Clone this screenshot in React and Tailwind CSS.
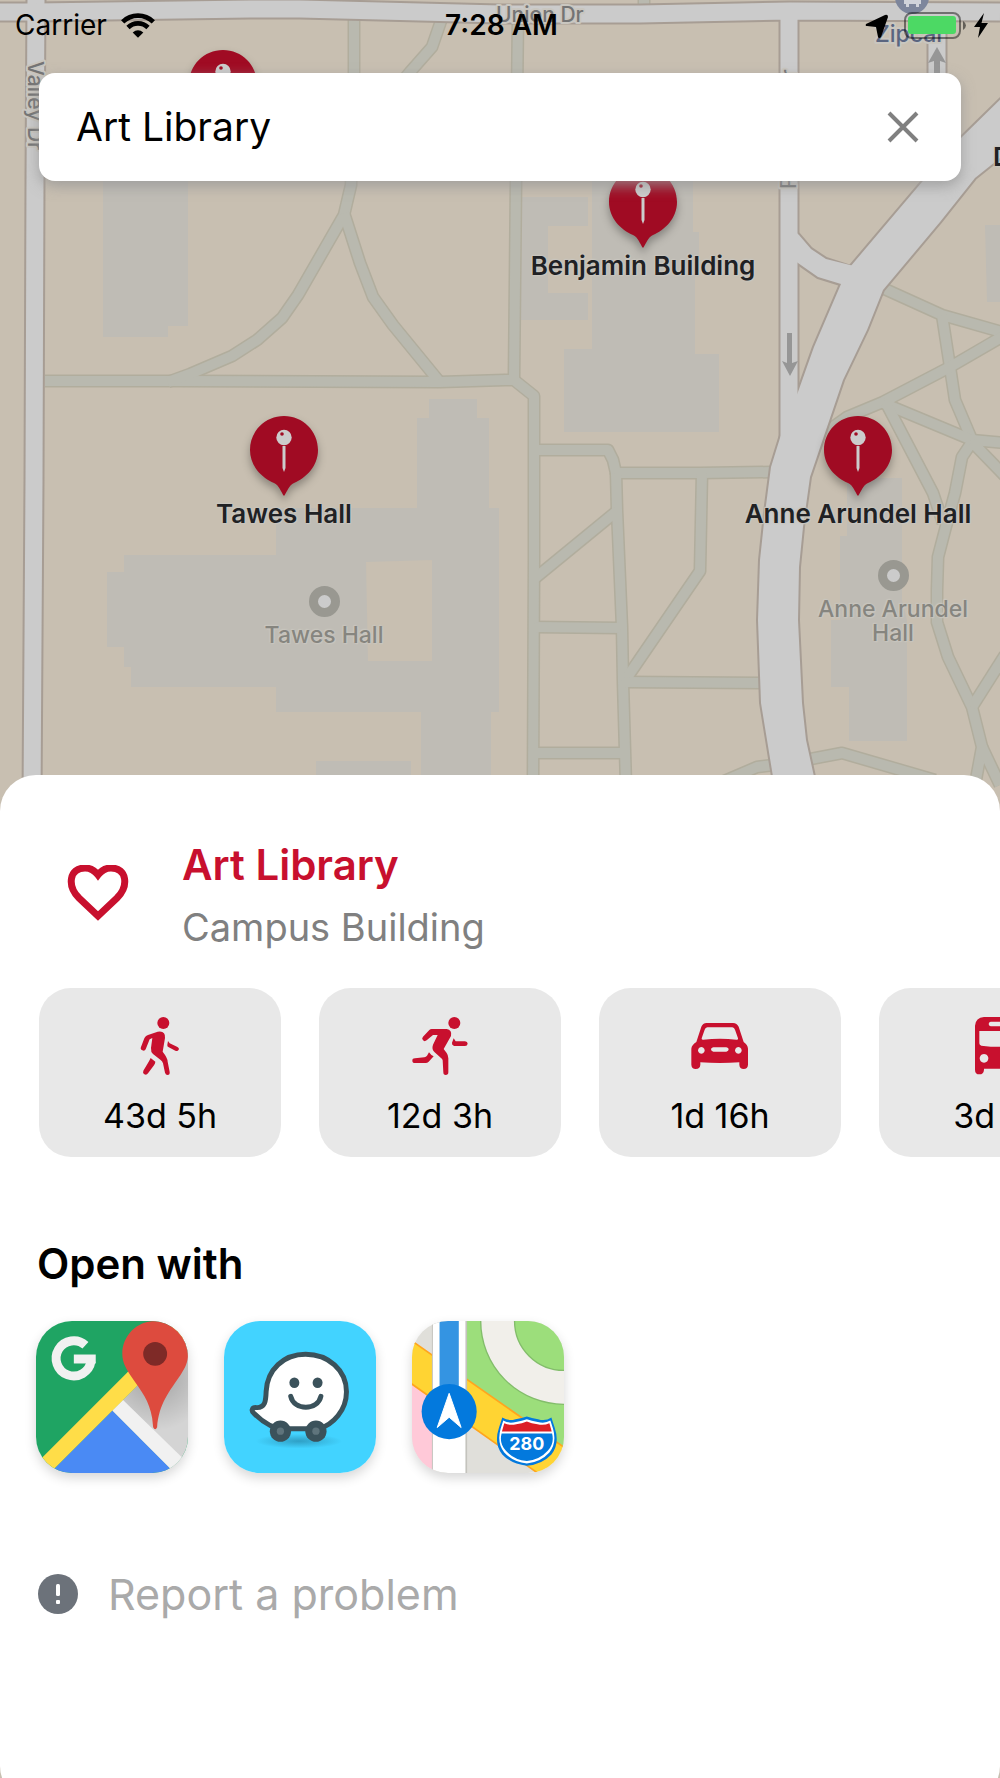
import React from "react";

const FOOTPATHS = [
  "M45 381H180L440 382L505 380H514L534 396V560L533 790",
  "M354 15V90L351 185L344 215L298 295L282 318L257 340L232 356L190 374L168 382",
  "M344 213L360 263L373 297L393 325L438 380",
  "M442 18L432 47L410 72L375 115L354 170",
  "M518 15L516 180L514 380",
  "M644 0V10",
  "M536 450H608L613 460L616 473H700L772 472",
  "M616 473L617 510L622 627L623 682L626 785",
  "M534 579L617 511",
  "M702 473L700 571L624 682",
  "M534 627L621 628",
  "M624 682L762 683",
  "M533 753H625",
  "M715 785L757 767L790 763L842 753L935 780",
  "M878 286L942 315L1005 333",
  "M942 315L950 367L955 400L972 440",
  "M1005 335L950 367L883 402L847 417L826 432",
  "M883 403L972 440L1005 443",
  "M886 403L933 493L943 523",
  "M972 442L962 457L955 493L945 530L938 557L937 590V622L948 657L972 707L982 747L975 785",
  "M972 707L1005 655",
  "M982 747L1000 785",
  "M972 442L1005 476",
];

const ROADS = [
  "M36 0L35 180L34 480L32 800",
  "M0 12L36 12L250 9H300L500 14L640 14L790 11L1000 12",
  "M789 12V440",
  "M937 12V170",
];

const MAIN_ROAD =
  "M1010 90L962 137L922 182L850 267L841 284L814 347L798 392L780 438L771 467L765 513L760 560L758 620L761 703L776 795H818L806 740L802 703L798 620L799 567L803 527L810 477L843 380L867 330L883 290L940 222L975 178L1010 150Z";

const LABEL = "font-medium [paint-order:stroke] stroke-[#c9c6bf]";

function MapGround() {
  return (
    <svg
      aria-hidden="true"
      viewBox="0 0 1000 1778"
      preserveAspectRatio="xMidYMin slice"
      className="absolute inset-0 h-full w-full"
    >
      <rect width="1000" height="1778" fill="#c8bfb1" />
      <g fill="#bfbcb5">
        <path d="M103 150H188V326H168V337H103Z" />
        <path d="M513 197H588V226H548V293H588V320H513Z" />
        <path d="M592 150H693V232H699V277H695V354H719V432H564V349H592Z" />
        <path d="M429 399H477V418H489V508H499V712H491V790H421V712H276V687H131V667H124V647H107V572H124V555H276V508H417V418H429Z" />
        <path d="M316 761H411V790H316Z" />
        <path d="M847 478H902V600L907 620V741H849V687H831V620H840V536H847Z" />
        <path d="M985 225H1000V302H987Z" />
      </g>
      <path d="M366 562L432 560V661H368Z" fill="#c8bfb1" />

      <g fill="none" strokeLinejoin="round">
        <g stroke="#b1ad9d" strokeWidth="13">
          {FOOTPATHS.map((d) => <path key={d} d={d} />)}
        </g>
        <g stroke="#b9b9af" strokeWidth="10">
          {FOOTPATHS.map((d) => <path key={d} d={d} />)}
        </g>
        <g stroke="#a79d94" strokeWidth="21">
          {ROADS.map((d) => <path key={d} d={d} />)}
        </g>
        <path d={MAIN_ROAD} stroke="#a79d94" strokeWidth="4" />
        <path
          d="M790 227L799 235L811 249L826 259L860 270L850 287L818 277L798 263L790 256Z"
          stroke="#a79d94"
          strokeWidth="4"
        />
      </g>
      <path d={MAIN_ROAD} fill="#cbcbcb" />
      <path d="M790 227L799 235L811 249L826 259L862 268L850 287L841 284L818 277L798 263L790 256Z" fill="#cbcbcb" />
      <g fill="none" stroke="#cbcbcb" strokeWidth="17">
        {ROADS.map((d) => <path key={d} d={d} />)}
      </g>

      <g fill="#969696">
        <path d="M787 333h5v30l6-2l-8 15l-8-15l5 2z" />
        <path d="M934 90V61l-6 2l9-16l9 16l-6-2v29z" />
      </g>
      <circle cx="912" cy="-3" r="17" fill="#7d869c" />
      <path d="M904 -6h17v10h-2v3h-3v-3h-7v3h-3v-3h-2z" fill="#d0d3da" />

      <g fontFamily="Inter, sans-serif" fontSize="21" fill="#747474" strokeWidth="4" strokeLinejoin="round">
        <text x="496" y="22" className={LABEL}>Union Dr</text>
        <text x="875" y="42" fontSize="23" fill="#5a6580" className={LABEL}>Zipcar</text>
        <text transform="translate(28 61) rotate(90)" className={LABEL}>Valley Dr</text>
        <text transform="translate(796 189) rotate(-90)" className={LABEL}>Preinkert Dr</text>
      </g>
    </svg>
  );
}

const HALO =
  "[text-shadow:0_0_2px_#c9c6bf,0_0_3px_#c9c6bf,1px_1px_1px_#c9c6bf,-1px_-1px_1px_#c9c6bf]";

function Pin({ place, name }) {
  return (
    <button
      type="button"
      className={`absolute flex w-[260px] -translate-x-1/2 flex-col items-center gap-[2px] ${place}`}
    >
      <svg viewBox="0 0 68 80" className="h-[80px] w-[68px] drop-shadow-[0_5px_4px_rgba(0,0,0,0.3)]">
        <path
          d="M34 0C15 0 0 15 0 34C0 50 12 62 24 67C29 69 31 76 34 80C37 76 39 69 44 67C56 62 68 50 68 34C68 15 53 0 34 0Z"
          fill="#a00b23"
        />
        <circle cx="34" cy="21.500" r="7.700" fill="#ccc" />
        <circle cx="32" cy="18" r="1.800" fill="#a00b23" />
        <path d="M32.500 30h3v22l-1.500 4l-1.500-4z" fill="#ccc" />
      </svg>
      <span className={`text-[26px] leading-[32px] font-semibold whitespace-nowrap text-[#202124] ${HALO}`}>
        {name}
      </span>
    </button>
  );
}

function Landmark({ place, name }) {
  return (
    <div className={`absolute flex w-[180px] -translate-x-1/2 flex-col items-center gap-[6px] ${place}`}>
      <span className="size-[31px] rounded-full border-[9px] border-[#999891] bg-[#cbcbcb]" />
      <span className={`text-center text-[23px] leading-[24px] font-medium text-[#86857f] ${HALO}`}>{name}</span>
    </div>
  );
}

function StatusBar() {
  return (
    <header className="relative grid h-[50px] grid-cols-3 items-center pr-3 pl-[15px] text-[28px] leading-[32px] text-black">
      <div className="flex items-center gap-[14px]">
        <span>Carrier</span>
        <svg viewBox="0 0 102 74" className="h-[25px] w-[34px]" aria-label="Wi-Fi">
          <g fill="none" stroke="#000" strokeWidth="14">
            <path d="M5 26A66 66 0 0 1 97 26" />
            <path d="M21 43A43 43 0 0 1 81 43" />
          </g>
          <path d="M51 74L35 58Q51 44 67 58Z" />
        </svg>
      </div>
      <span className="text-center font-semibold">7:28 AM</span>
      <svg viewBox="0 0 124 28" className="h-[28px] w-[124px] justify-self-end" aria-label="Location, battery charging">
        <path d="M2 13Q1 15 3 15L12 16L14 26Q15 28 17 26L24 6Q24 3 21 4Z" />
        <rect x="41" y="2" width="55" height="25" rx="7" fill="none" stroke="#000" strokeOpacity=".45" strokeWidth="2" />
        <rect x="44" y="5" width="48" height="18" rx="3" fill="#4cd964" />
        <path d="M99 10Q102 12 102 14.500T99 19Z" fillOpacity=".5" />
        <path d="M120 2L110 16H116L114 27L124 12H117.500Z" />
      </svg>
    </header>
  );
}

function WalkIcon() {
  return (
    <g>
      <circle cx="100" cy="21" r="18" />
      <path d="M46 62Q49 59 54 57L83 47Q107 43 105 66L98 107Q113 126 113 137L119 168Q120 177 113 177Q107 177 105 170L99 142Q97 135 91 131L69 114Q62 108 63 96L67 66L59 70L47 100Q44 106 37 103Q30 100 33 93L43 67Z" />
      <path d="M114 75L119 82L141 92Q149 96 146 101Q143 107 136 104L115 93Q111 91 112 86Z" />
      <path d="M62 126L76 137Q76 142 72 148L54 172Q50 178 43 175Q37 171 40 164L57 136Z" />
    </g>
  );
}

function RunIcon() {
  return (
    <g>
      <circle cx="133" cy="21" r="18" />
      <path d="M65 39H110Q127 42 123 60L101 99L110 111Q115 118 115 127V169Q115 177 107 177Q100 177 100 169L98 133Q97 129 93 126L74 109Q64 100 69 86L83 57H69L50 73Q44 78 39 73Q34 67 39 62L58 42Q61 39 65 39Z" />
      <path d="M131 67L137 76H165Q173 77 173 83Q172 90 165 90H132Q124 86 126 80Z" />
      <path d="M57 109Q63 118 71 121L56 137Q52 141 47 141H15Q7 141 7 134Q7 127 15 127L43 124Q48 123 51 119Z" />
    </g>
  );
}

function CarIcon() {
  return (
    <path
      fillRule="evenodd"
      d="M50 21H129Q141 22 146 32L161 78Q173 86 174 98V146Q173 159 161 159Q149 159 148 146V139Q90 143 31 139V146Q30 159 17 159Q5 159 4 146V98Q5 87 19 78L34 32Q38 22 50 21ZM52 34Q46 35 44 41L35 67Q34 72 40 71Q90 65 139 71Q146 72 144 67L135 41Q133 35 127 34ZM34 93a10 10 0 1 0 .1 0ZM145 93a10 10 0 1 0 .1 0ZM70 94Q63 95 63 100Q63 106 70 107H109Q116 106 116 100Q116 95 109 94Z"
    />
  );
}

function BusIcon() {
  return (
    <path
      fillRule="evenodd"
      d="M42 3H138Q163 5 165 29V161Q165 175 152 175Q139 175 138 161V158H42V161Q41 175 28 175Q15 175 15 161V29Q17 5 42 3ZM62 17Q56 18 56 24Q56 29 62 31H118Q124 29 124 24Q124 18 118 17ZM28 45V82Q28 88 34 89Q90 96 146 89Q152 88 152 82V45ZM42 114a13 13 0 1 0 .1 0ZM138 114a13 13 0 1 0 .1 0Z"
    />
  );
}

const TRAVEL = [
  { mode: "Walk", time: "43d 5h", Icon: WalkIcon },
  { mode: "Run", time: "12d 3h", Icon: RunIcon },
  { mode: "Drive", time: "1d 16h", Icon: CarIcon },
  { mode: "Bus", time: "3d 4h", Icon: BusIcon },
];

function GoogleMapsLogo() {
  return (
    <svg viewBox="0 0 458 458" className="size-full">
      <defs>
        <radialGradient id="pinShade" cx="359" cy="160" r="170" gradientUnits="userSpaceOnUse">
          <stop offset="0.4" stopColor="#000" stopOpacity=".15" />
          <stop offset="1" stopColor="#000" stopOpacity="0" />
        </radialGradient>
      </defs>
      <rect width="458" height="458" fill="#1fa463" />
      <path d="M500 0L230 270L458 498V0Z" fill="#d4d4d4" />
      <path d="M262 238L458 434V40Z" fill="url(#pinShade)" />
      <path d="M-5 505L230 270L465 505Z" fill="#4a8af4" />
      <path d="M230 270L262 238L480 450L440 480Z" fill="#f1f1f1" />
      <path d="M-40 470L430 0H500L0 500Z" fill="#ffdd48" />
      <path
        d="M359 0C304 0 260 44 260 99C260 127 273 147 288 169C318 212 341 240 350 292L353 320Q359 333 365 320C370 250 402 212 436 162C450 141 458 124 458 99C458 44 414 0 359 0Z"
        fill="#dd4b3e"
      />
      <circle cx="359" cy="99" r="36" fill="#7e2a27" />
      <path d="M149 73A53 53 0 1 0 166 121" fill="none" stroke="#f1f1f1" strokeWidth="27" />
      <rect x="114" y="101" width="66" height="27" fill="#f1f1f1" />
    </svg>
  );
}

function WazeLogo() {
  return (
    <svg viewBox="0 0 458 458" className="size-full">
      <defs>
        <radialGradient id="wheelShade">
          <stop offset="0" stopColor="#1c6c8c" stopOpacity=".5" />
          <stop offset="1" stopColor="#1c6c8c" stopOpacity="0" />
        </radialGradient>
      </defs>
      <rect width="458" height="458" fill="#42d3ff" />
      <ellipse cx="226" cy="362" rx="130" ry="22" fill="url(#wheelShade)" />
      <path
        d="M246 100C180 100 130 146 127 212C126 242 124 262 98 261C84 260 81 270 90 278C120 308 148 325 180 325H285C330 312 369 268 369 213C369 148 314 100 246 100Z"
        fill="#fff"
        stroke="#3b525b"
        strokeWidth="15"
        strokeLinejoin="round"
      />
      <g fill="#3b525b">
        <circle cx="170" cy="332" r="32" />
        <circle cx="277" cy="332" r="32" />
        <ellipse cx="212" cy="186" rx="15" ry="16" />
        <ellipse cx="282" cy="186" rx="15" ry="16" />
      </g>
      <circle cx="170" cy="332" r="11" fill="#5f747c" />
      <circle cx="277" cy="332" r="11" fill="#5f747c" />
      <path d="M201 227C210 271 283 271 292 227" fill="none" stroke="#3b525b" strokeWidth="15" strokeLinecap="round" />
    </svg>
  );
}

function AppleMapsLogo() {
  return (
    <svg viewBox="0 0 458 458" className="size-full">
      <rect width="458" height="458" fill="#e0dfda" />
      <path d="M0 190L70 240V458H0Z" fill="#ffc9d8" />
      <path d="M162 0H458V385L162 177Z" fill="#9cde7b" />
      <circle cx="458" cy="0" r="200" fill="none" stroke="#83bd6b" strokeWidth="106" />
      <circle cx="458" cy="0" r="200" fill="none" stroke="#f1efea" strokeWidth="98" />
      <path d="M-20 46L480 396V530L-20 176Z" fill="#ffd433" stroke="#ffa51f" strokeWidth="5" />
      <path d="M60 0H166V458H60Z" fill="#c4c3bd" />
      <path d="M63 0H161V458H63Z" fill="#fff" />
      <path d="M83 0H141V240H83Z" fill="#3494e2" />
      <circle cx="112" cy="273" r="83" fill="#0379dd" />
      <path d="M112 218L148 321L112 290L76 321Z" fill="#fff" stroke="#fff" strokeWidth="3" strokeLinejoin="round" />
      <path
        d="M272 291Q290 303 312 296Q332 293 346 288Q360 293 380 296Q402 303 420 291L430 322Q446 370 420 402Q392 432 346 436Q300 432 272 402Q246 370 262 322Z"
        fill="#0379dd"
      />
      <path
        d="M275 300Q292 310 313 304Q332 301 346 296Q360 301 379 304Q400 310 417 300L425 325Q437 368 414 396Q388 425 346 429Q304 425 278 396Q255 368 267 325Z"
        fill="#fff"
      />
      <path d="M278 308Q295 316 314 311Q332 309 346 303Q360 309 378 311Q397 316 414 308L421 333H271Z" fill="#dc1f26" />
      <path d="M270 339H422Q430 368 409 391Q385 418 346 422Q307 418 283 391Q262 368 270 339Z" fill="#0379dd" />
      <text
        x="346"
        y="390"
        textAnchor="middle"
        fontFamily="Inter, sans-serif"
        fontWeight="700"
        fontSize="54"
        fill="#fff"
      >
        280
      </text>
    </svg>
  );
}

const MAP_APPS = [
  { name: "Google Maps", Logo: GoogleMapsLogo },
  { name: "Waze", Logo: WazeLogo },
  { name: "Apple Maps", Logo: AppleMapsLogo },
];

export default function App() {
  return (
    <div className="relative flex min-h-screen flex-col overflow-hidden bg-[#c8bfb1] font-['Inter',sans-serif]">
      <MapGround />
      <Pin place="left-[223px] top-[50px]" name="" />
      <Pin place="left-[643px] top-[168px]" name="Benjamin Building" />
      <Pin place="left-[284px] top-[416px]" name="Tawes Hall" />
      <Pin place="left-[858px] top-[416px]" name="Anne Arundel Hall" />
      <Landmark place="left-[324px] top-[586px]" name="Tawes Hall" />
      <Landmark place="left-[893px] top-[560px]" name="Anne Arundel Hall" />
      <span className={`absolute top-[141px] left-[993px] text-[26px] leading-[32px] font-semibold text-[#202124] ${HALO}`}>
        D
      </span>

      <StatusBar />
      <div className="relative flex-1 px-[39px] pt-[23px]">
        <form
          className="flex h-[108px] items-center rounded-[16px] bg-white pr-[40px] pl-[37px] shadow-[0_5px_14px_rgba(150,150,150,0.8)]"
          onSubmit={(e) => e.preventDefault()}
        >
          <input
            type="text"
            aria-label="Search places"
            defaultValue="Art Library"
            className="min-w-0 flex-1 bg-transparent text-[39px] leading-[48px] text-black outline-none"
          />
          <button type="button" aria-label="Clear search">
            <svg viewBox="0 0 36 36" className="size-[36px]" fill="none" stroke="#808080" strokeWidth="4">
              <path d="M4 4L32 32M32 4L4 32" />
            </svg>
          </button>
        </form>
      </div>

      <main className="relative -mb-6 rounded-[36px] bg-white pt-[59px] pb-[184px]">
        <div className="flex items-center gap-[53px] px-[67px]">
          <button type="button" aria-label="Add to favorites">
            <svg viewBox="0 0 62 62" className="size-[62px]" fill="none" stroke="#c8102e" strokeWidth="7">
              <path d="M31 51L12 33C0 21 2 3 18 3C24 3 28 6 31 10C34 6 38 3 44 3C60 3 62 21 50 33Z" />
            </svg>
          </button>
          <div>
            <h1 className="text-[42px] leading-[62px] font-semibold text-[#c8102e]">Art Library</h1>
            <p className="text-[38px] leading-[62px] text-[#808080]">Campus Building</p>
          </div>
        </div>

        <ul className="mt-[30px] flex gap-[38px] overflow-x-auto px-[39px] [scrollbar-width:none]">
          {TRAVEL.map(({ mode, time, Icon }) => (
            <li key={mode} className="shrink-0">
              <button
                type="button"
                aria-label={`${mode}, ${time}`}
                className="flex w-[242px] flex-col items-center gap-5 rounded-[32px] bg-[#e8e8e8] pt-7 pb-[21px]"
              >
                <svg viewBox="0 0 180 180" className="size-[60px]" fill="#c8102e">
                  <Icon />
                </svg>
                <span className="text-[34px] leading-[40px] text-black">{time}</span>
              </button>
            </li>
          ))}
        </ul>

        <h2 className="mt-[79px] px-[37px] text-[42px] leading-[56px] font-semibold text-black">Open with</h2>
        <div className="mt-[29px] flex gap-[36px] px-[36px]">
          {MAP_APPS.map(({ name, Logo }) => (
            <button
              key={name}
              type="button"
              aria-label={name}
              className="size-[152px] overflow-hidden rounded-[36px] shadow-[0_5px_12px_rgba(0,0,0,0.16)]"
            >
              <Logo />
            </button>
          ))}
        </div>

        <button type="button" className="mt-[97px] ml-[38px] flex items-center gap-[30px]">
          <svg viewBox="0 0 40 40" className="size-[40px]">
            <circle cx="20" cy="20" r="20" fill="#6c727a" />
            <rect x="18" y="10" width="4" height="12" rx="1.500" fill="#fff" />
            <rect x="18" y="26" width="4" height="4" rx="1" fill="#fff" />
          </svg>
          <span className="text-[43px] leading-[48px] text-[#aaaaaa]">Report a problem</span>
        </button>
      </main>
    </div>
  );
}
